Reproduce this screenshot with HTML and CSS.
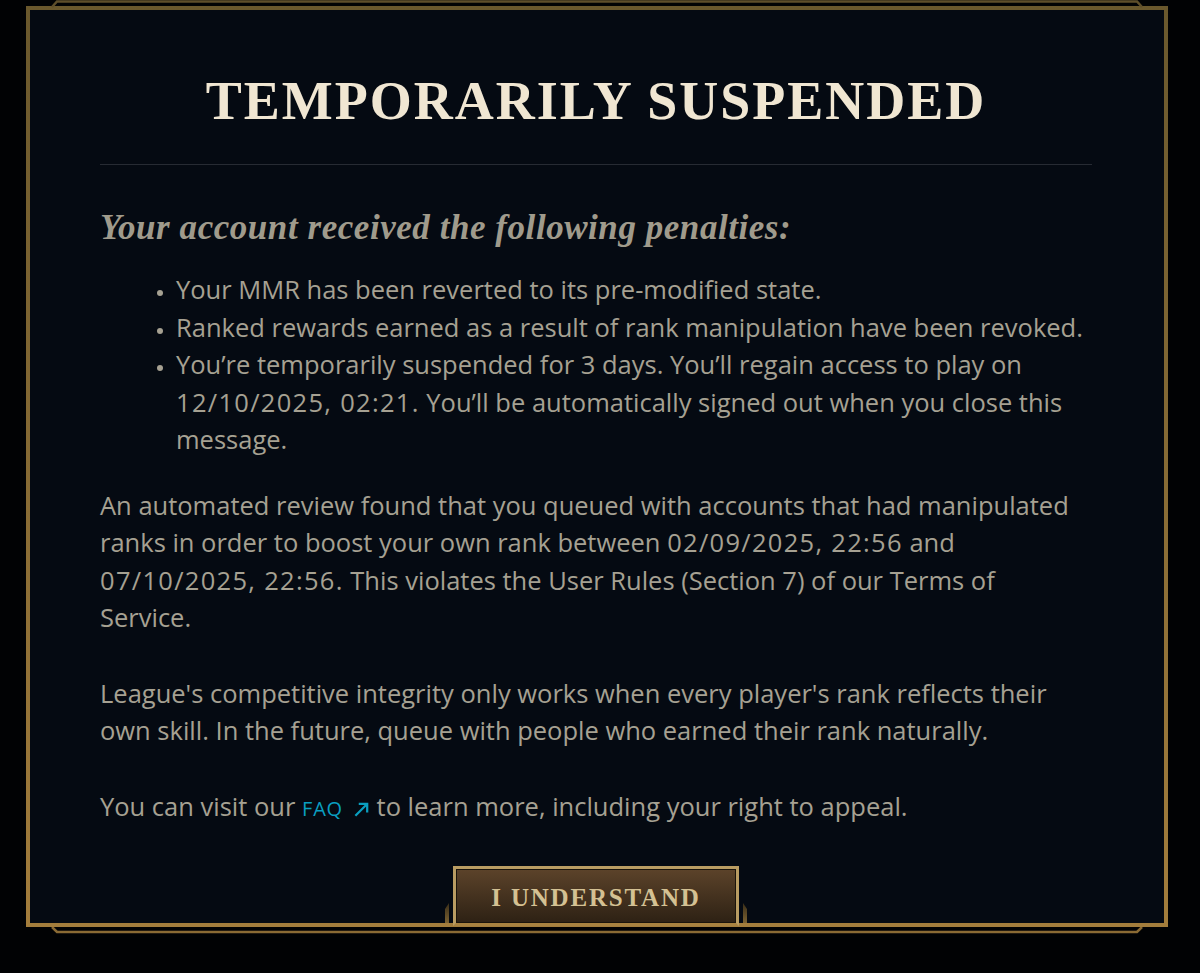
FILE: index.html
```html
<!DOCTYPE html>
<html lang="en">
<head>
<meta charset="utf-8">
<title>Temporarily Suspended</title>
<link rel="stylesheet" href="styles.css">
</head>
<body>
<div class="stage">
  <svg class="trim trim-top" width="1200" height="10" viewBox="0 0 1200 10" aria-hidden="true">
    <polyline points="52,7 57,1.5 1137,1.5 1142,7" fill="none" stroke="#5e4e2a" stroke-width="2.5"/>
  </svg>
  <div class="frame">
    <h1 class="title">TEMPORARILY SUSPENDED</h1>
    <hr class="divider">
    <h2 class="subtitle">Your account received the following penalties:</h2>
    <ul class="penalties">
      <li>Your MMR has been reverted to its pre-modified state.</li>
      <li>Ranked rewards earned as a result of rank manipulation have been revoked.</li>
      <li>You’re temporarily suspended for 3 days. You’ll regain access to play on <span class="num">12/10/2025, 02:21.</span> You’ll be automatically signed out when you close this message.</li>
    </ul>
    <p class="body">An automated review found that you queued with accounts that had manipulated ranks in order to boost your own rank between <span class="num">02/09/2025, 22:56</span> and <span class="num">07/10/2025, 22:56.</span> This violates the User Rules (Section 7) of our Terms of Service.</p>
    <p class="body">League's competitive integrity only works when every player's rank reflects their own skill. In the future, queue with people who earned their rank naturally.</p>
    <p class="body">You can visit our <a class="faq" href="#">FAQ <svg class="ext" width="18" height="18" viewBox="0 0 16 16" aria-hidden="true"><path d="M3 14 L13 4 M6 3.5 H13.5 V11" fill="none" stroke="#0a9fc0" stroke-width="2"/></svg></a> to learn more, including your right to appeal.</p>
    <div class="actions">
      <span class="tab tab-left"></span>
      <button class="btn">I UNDERSTAND</button>
      <span class="tab tab-right"></span>
    </div>
  </div>
  <svg class="trim trim-bottom" width="1200" height="10" viewBox="0 0 1200 10" aria-hidden="true">
    <polyline points="52,0 57,5 1137,5 1142,0" fill="none" stroke="#8a6a34" stroke-width="2.5"/>
  </svg>
</div>
</body>
</html>
```

FILE: styles.css
```css
html, body {
  margin: 0;
  padding: 0;
  background: #010204;
}
body {
  width: 1200px;
  height: 973px;
  overflow: hidden;
}
.stage {
  position: relative;
  padding: 6px 0 0 26px;
}
.trim {
  position: absolute;
  left: 0;
  display: block;
}
.trim-top { top: 0; }
.trim-bottom { top: 927px; }
.frame {
  box-sizing: border-box;
  width: 1142px;
  height: 921px;
  border: 4px solid #735f30;
  border-image: linear-gradient(to bottom, #6a582d, #a37d3c) 1;
  background: #050a12;
  padding: 0 72px 0 70px;
  display: flex;
  flex-direction: column;
}
.title {
  margin: 59px 0 0;
  text-align: center;
  font-family: "Liberation Serif", serif;
  font-weight: 700;
  font-size: 54px;
  line-height: 64px;
  letter-spacing: 2px;
  color: #f0e6d2;
}
.divider {
  margin: 31px 0 0;
  border: 0;
  height: 1px;
  flex: none;
  background: #272b33;
}
.subtitle {
  margin: 43px 0 0;
  font-family: "Liberation Serif", serif;
  font-style: italic;
  font-weight: 700;
  font-size: 35px;
  line-height: 40px;
  color: #a09b8c;
  letter-spacing: 0.55px;
}
.penalties,
.body {
  font-family: "Open Sans", "Noto Sans", sans-serif;
  font-size: 25.5px;
  line-height: 37.5px;
  color: #a6a192;
}
.num {
  display: inline-block;
  letter-spacing: 1.3px;
}
.penalties {
  margin: 23px 0 0;
  padding: 0 0 0 76px;
}
.penalties li::marker {
  font-size: 17px;
}
.body {
  margin: 28px 0 0;
}
.body + .body {
  margin-top: 38px;
}
.faq {
  color: #0a9fc0;
  text-decoration: none;
  font-size: 20px;
  letter-spacing: 0.8px;
}
.ext {
  vertical-align: -2px;
  margin-left: 3px;
}
.actions {
  margin-top: auto;
  margin-bottom: -3px;
  display: flex;
  justify-content: center;
  align-items: flex-end;
}
.btn {
  box-sizing: border-box;
  width: 286px;
  height: 60px;
  border: 3px solid #b99c62;
  border-bottom-color: #a88240;
  box-shadow: inset 0 0 0 1px #1a140c;
  background: linear-gradient(to bottom, #5c432a, #2d2114);
  font-family: "Liberation Serif", serif;
  font-weight: 700;
  font-size: 25px;
  letter-spacing: 1.8px;
  color: #d4c193;
  padding: 3px 0 0;
  cursor: pointer;
}
.tab {
  display: block;
  width: 4px;
  height: 20px;
  background: linear-gradient(to bottom, #3a2e18, #7c6232);
  margin-bottom: 3px;
}
.tab-left { margin-right: 4px; clip-path: polygon(0 30%, 100% 0, 100% 100%, 0 100%); }
.tab-right { margin-left: 4px; clip-path: polygon(0 0, 100% 30%, 100% 100%, 0 100%); }
```
